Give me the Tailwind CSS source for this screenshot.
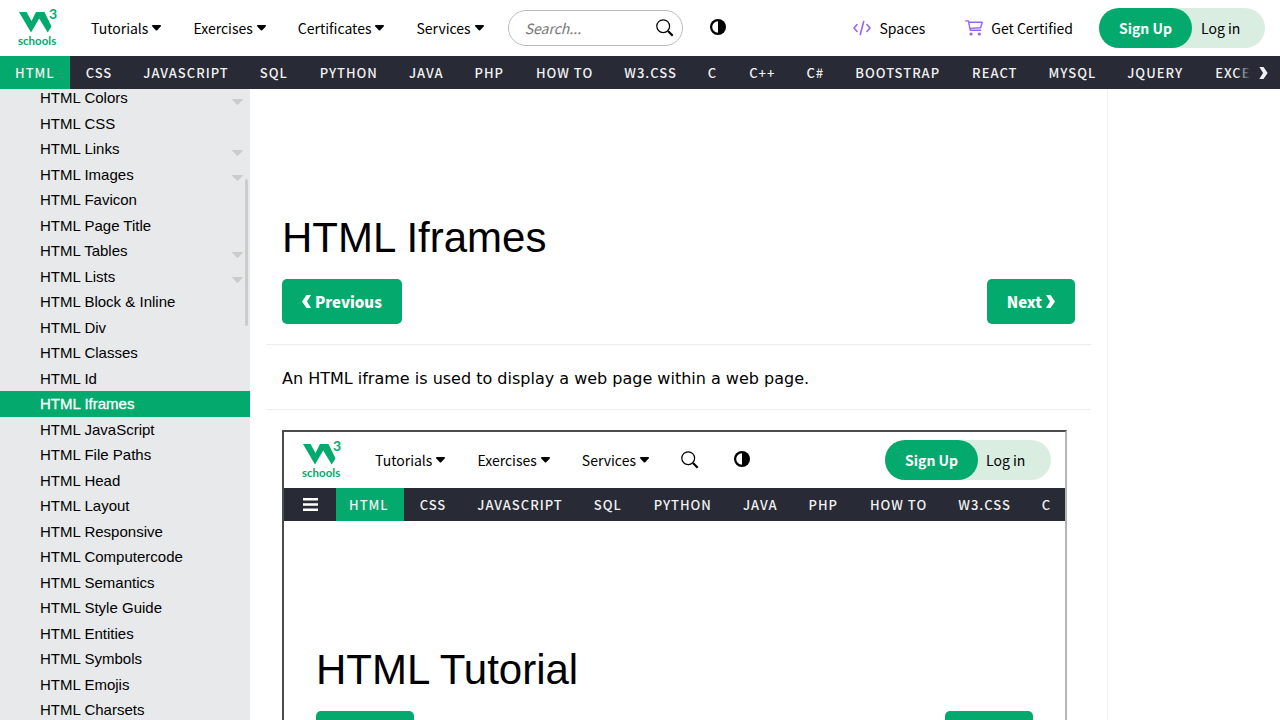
<!DOCTYPE html>
<html lang="en">
<head>
<meta charset="utf-8">
<meta name="viewport" content="width=device-width, initial-scale=1">
<title>HTML Iframes</title>
<script src="https://cdn.jsdelivr.net/npm/@tailwindcss/browser@4"></script>
</head>
<body class="flex h-screen flex-col overflow-hidden bg-white text-black font-['Noto_Sans_CJK_SC','Noto_Sans',sans-serif]">
<svg class="hidden">
  <symbol id="logo" viewBox="0 0 40 38">
    <path fill="#04aa6d" d="M1 3h7.500l5 9 2.500-5 2-4h8.500L33.500 17.500 29.700 23.500 21.200 9.500 13 23.500z"/>
    <text x="31" y="9.500" font-family="Lato, sans-serif" font-weight="700" font-size="14" fill="#04aa6d">3</text>
    <text x="0" y="35.500" font-family="Lato, sans-serif" font-weight="700" font-size="11.500" fill="#04aa6d">schools</text>
  </symbol>
  <symbol id="caret" viewBox="0 0 9 6"><path d="M1 0h7c.8 0 1.300.9.700 1.500L5.200 5.200a1 1 0 0 1-1.400 0L.3 1.500C-.3.900.2 0 1 0z"/></symbol>
  <symbol id="search" viewBox="0 0 18 18"><circle cx="7.200" cy="7.200" r="6.400" fill="none" stroke="#000" stroke-width="1.200"/><path d="M12 12l4.700 4.700" stroke="#000" stroke-width="2.200"/></symbol>
  <symbol id="contrast" viewBox="0 0 16 16"><circle cx="8" cy="8" r="8"/><path fill="#fff" d="M8 2.200a5.800 5.800 0 0 0 0 11.600z"/></symbol>
  <symbol id="next" viewBox="0 0 9 13"><path fill="currentColor" d="M0 0h4.500L9 6.500 4.500 13H0l4-6.500z"/></symbol>
  <symbol id="prev" viewBox="0 0 9 13"><path fill="currentColor" d="M9 0H4.500L0 6.500 4.500 13H9L5 6.500z"/></symbol>
</svg>

<header class="flex h-14 shrink-0 items-center pr-[15px] text-sm leading-6">
  <a href="#" aria-label="W3Schools home" class="ml-[18px] mr-[17px]"><svg class="h-[38px] w-10 overflow-visible"><use href="#logo"/></svg></a>
  <nav class="flex items-center">
    <button class="flex items-center gap-1 px-4">Tutorials<svg class="h-1.5 w-[9px]"><use href="#caret"/></svg></button>
    <button class="flex items-center gap-1 px-4">Exercises<svg class="h-1.5 w-[9px]"><use href="#caret"/></svg></button>
    <button class="flex items-center gap-1 px-4">Certificates<svg class="h-1.5 w-[9px]"><use href="#caret"/></svg></button>
    <button class="flex items-center gap-1 px-4">Services<svg class="h-1.5 w-[9px]"><use href="#caret"/></svg></button>
  </nav>
  <form class="ml-2 flex h-9 w-[175px] items-center rounded-full border border-[#bbb] pl-4 pr-2">
    <input type="text" aria-label="Search" placeholder="Search..." class="min-w-0 flex-1 italic outline-none placeholder:text-[#757575]">
    <button type="button" aria-label="Search"><svg class="h-[18px] w-[18px]"><use href="#search"/></svg></button>
  </form>
  <button aria-label="Dark mode" class="mb-0.5 ml-[27px]"><svg class="h-4 w-4"><use href="#contrast"/></svg></button>
  <div class="ml-auto flex items-center">
    <a href="#" class="flex items-center gap-2"><svg class="h-4 w-[18px]" viewBox="0 0 18 16" fill="none" stroke="#9763f6" stroke-width="1.600" stroke-linecap="round" stroke-linejoin="round"><path d="M4 4.500L1 8l3 3.500M14 4.500L17 8l-3 3.500M10.700 1.500L7.300 14.500"/></svg>Spaces</a>
    <a href="#" class="ml-10 flex items-center gap-2"><svg class="h-4 w-[18px]" viewBox="0 0 18 16" fill="none" stroke="#9763f6" stroke-width="1.400" stroke-linecap="round" stroke-linejoin="round"><path d="M.7.900h2.600l2 9.300h10.200M3.800 2.300h13.400l-1.600 5.500-10.700.6"/><g fill="#9763f6" stroke="none"><circle cx="6" cy="14" r="1.600"/><circle cx="14.300" cy="14" r="1.600"/></g></svg>Get Certified</a>
    <div class="ml-[26px] flex h-10 items-center rounded-full bg-[#d9eee1]">
      <a href="#" class="flex h-10 w-[93px] items-center justify-center rounded-full bg-[#04aa6d] font-bold text-white">Sign Up</a>
      <a href="#" class="w-[73px] pl-[9px]">Log in</a>
    </div>
  </div>
</header>

<nav class="relative flex h-[33px] shrink-0 overflow-hidden whitespace-nowrap bg-[#282a35] text-[13px] font-medium leading-[33px] tracking-[1px] text-[#f1f1f1]">
  <a href="#" class="bg-[#04aa6d] px-[15px]">HTML</a>
  <div class="flex *:pl-4 *:pr-[15px] *:nth-[3n]:pr-4">
    <a href="#">CSS</a>
    <a href="#">JAVASCRIPT</a>
    <a href="#">SQL</a>
    <a href="#">PYTHON</a>
    <a href="#">JAVA</a>
    <a href="#">PHP</a>
    <a href="#">HOW TO</a>
    <a href="#">W3.CSS</a>
    <a href="#">C</a>
    <a href="#">C++</a>
    <a href="#">C#</a>
    <a href="#">BOOTSTRAP</a>
    <a href="#">REACT</a>
    <a href="#">MYSQL</a>
    <a href="#">JQUERY</a>
    <a href="#">EXCEL</a>
  </div>
  <button aria-label="Scroll right" class="absolute inset-y-0 right-0 flex w-11 items-center justify-end bg-linear-to-r from-transparent to-[#282a35] to-35% pr-3"><svg class="h-3 w-[9px]"><use href="#next"/></svg></button>
</nav>

<div class="flex min-h-0 flex-1">
  <aside class="relative w-[250px] shrink-0 overflow-hidden bg-[#e7e9eb] font-['Liberation_Sans',sans-serif] text-[15px] leading-normal">
    <nav class="-mt-1 flex flex-col *:pb-px *:pl-10 *:pr-[7px] *:pt-[2px]">
      <a href="#" class="flex items-end justify-between">HTML Colors<svg class="mb-[5px] h-1.5 w-[11px] fill-[#ccc]"><use href="#caret-flat"/></svg></a>
      <a href="#">HTML CSS</a>
      <a href="#" class="flex items-end justify-between">HTML Links<svg class="mb-[5px] h-1.5 w-[11px] fill-[#ccc]"><use href="#caret-flat"/></svg></a>
      <a href="#" class="flex items-end justify-between">HTML Images<svg class="mb-[5px] h-1.5 w-[11px] fill-[#ccc]"><use href="#caret-flat"/></svg></a>
      <a href="#">HTML Favicon</a>
      <a href="#">HTML Page Title</a>
      <a href="#" class="flex items-end justify-between">HTML Tables<svg class="mb-[5px] h-1.5 w-[11px] fill-[#ccc]"><use href="#caret-flat"/></svg></a>
      <a href="#" class="flex items-end justify-between">HTML Lists<svg class="mb-[5px] h-1.5 w-[11px] fill-[#ccc]"><use href="#caret-flat"/></svg></a>
      <a href="#">HTML Block &amp; Inline</a>
      <a href="#">HTML Div</a>
      <a href="#">HTML Classes</a>
      <a href="#">HTML Id</a>
      <a href="#" aria-current="page" class="bg-[#04aa6d] text-white [-webkit-text-stroke:0.3px_white]">HTML Iframes</a>
      <a href="#">HTML JavaScript</a>
      <a href="#">HTML File Paths</a>
      <a href="#">HTML Head</a>
      <a href="#">HTML Layout</a>
      <a href="#">HTML Responsive</a>
      <a href="#">HTML Computercode</a>
      <a href="#">HTML Semantics</a>
      <a href="#">HTML Style Guide</a>
      <a href="#">HTML Entities</a>
      <a href="#">HTML Symbols</a>
      <a href="#">HTML Emojis</a>
      <a href="#">HTML Charsets</a>
    </nav>
    <svg class="hidden"><symbol id="caret-flat" viewBox="0 0 11 6"><path d="M.5 0h10c.5 0 .6.500.3.800L6.200 5.600a1 1 0 0 1-1.400 0L.2.800C-.1.500 0 0 .5 0z"/></symbol></svg>
    <div class="absolute right-[2px] top-[90px] h-[147px] w-[3px] rounded-full bg-[#ccc]"></div>
  </aside>

  <main class="min-w-0 flex-1 overflow-hidden px-4 pt-[117px]">
    <h1 class="px-4 font-['Liberation_Sans',sans-serif] text-[42px] leading-[64px]">HTML Iframes</h1>
    <div class="mt-[9px] flex justify-between px-4 text-[15px] font-black leading-6 text-white">
      <a href="#" class="flex h-[45px] items-center gap-1 rounded-[5px] bg-[#04aa6d] px-5"><svg class="h-[13px] w-[9px]"><use href="#prev"/></svg>Previous</a>
      <a href="#" class="flex h-[45px] items-center gap-1 rounded-[5px] bg-[#04aa6d] px-5">Next<svg class="h-[13px] w-[9px]"><use href="#next"/></svg></a>
    </div>
    <hr class="mt-5 border-[#eee]">
    <p class="px-4 pb-[18px] pt-[22px] font-['DejaVu_Sans',sans-serif] text-base">An HTML iframe is used to display a web page within a web page.</p>
    <hr class="mb-5 border-[#eee]">
    <div class="px-4">
      <section aria-label="Embedded page" class="w-[99%] overflow-hidden border-2 border-[#4c4c4c] border-r-[#b5b5b5]">
        <div class="flex h-14 items-center pr-[14px] text-sm leading-6">
          <a href="#" aria-label="W3Schools home" class="ml-[18px] mr-[17px]"><svg class="h-[38px] w-10 overflow-visible"><use href="#logo"/></svg></a>
          <button class="flex items-center gap-1 px-4">Tutorials<svg class="h-1.5 w-[9px]"><use href="#caret"/></svg></button>
          <button class="flex items-center gap-1 px-4">Exercises<svg class="h-1.5 w-[9px]"><use href="#caret"/></svg></button>
          <button class="flex items-center gap-1 px-4">Services<svg class="h-1.5 w-[9px]"><use href="#caret"/></svg></button>
          <button aria-label="Search" class="ml-4"><svg class="h-[18px] w-[18px]"><use href="#search"/></svg></button>
          <button aria-label="Dark mode" class="mb-0.5 ml-[35px]"><svg class="h-4 w-4"><use href="#contrast"/></svg></button>
          <div class="ml-auto flex h-10 items-center rounded-full bg-[#d9eee1]">
            <a href="#" class="flex h-10 w-[93px] items-center justify-center rounded-full bg-[#04aa6d] font-bold text-white">Sign Up</a>
            <a href="#" class="w-[73px] pl-2">Log in</a>
          </div>
        </div>
        <nav class="flex h-[33px] overflow-hidden whitespace-nowrap bg-[#282a35] text-[13px] font-medium leading-[33px] tracking-[1px] text-[#f1f1f1]">
          <button aria-label="Menu" class="flex w-[52px] shrink-0 items-center justify-center"><svg class="h-[13px] w-[15px]" viewBox="0 0 15 13" fill="#fff"><path d="M0 0h15v2.500H0zM0 5.200h15v2.500H0zM0 10.500h15V13H0z"/></svg></button>
          <a href="#" class="bg-[#04aa6d] pl-[13px] pr-[15px]">HTML</a>
          <div class="flex *:pl-4 *:pr-[15px] *:nth-[3n]:pr-4">
            <a href="#">CSS</a>
            <a href="#">JAVASCRIPT</a>
            <a href="#">SQL</a>
            <a href="#">PYTHON</a>
            <a href="#">JAVA</a>
            <a href="#">PHP</a>
            <a href="#">HOW TO</a>
            <a href="#">W3.CSS</a>
            <a href="#">C</a>
          </div>
        </nav>
        <div class="px-8 pb-8 pt-[117px]">
          <h2 class="font-['Liberation_Sans',sans-serif] text-[42px] leading-[64px]">HTML Tutorial</h2>
          <div class="mt-[9px] flex justify-between text-[15px] font-black leading-5 text-white">
            <a href="#" class="flex h-[45px] items-center gap-1 rounded-[5px] bg-[#04aa6d] px-5"><svg class="h-[13px] w-[9px]"><use href="#prev"/></svg>Home</a>
            <a href="#" class="flex h-[45px] items-center gap-1 rounded-[5px] bg-[#04aa6d] px-5">Next<svg class="h-[13px] w-[9px]"><use href="#next"/></svg></a>
          </div>
        </div>
      </section>
    </div>
  </main>
  <aside class="w-[173px] shrink-0 border-l border-[#f1f1f1]"></aside>
</div>
</body>
</html>
